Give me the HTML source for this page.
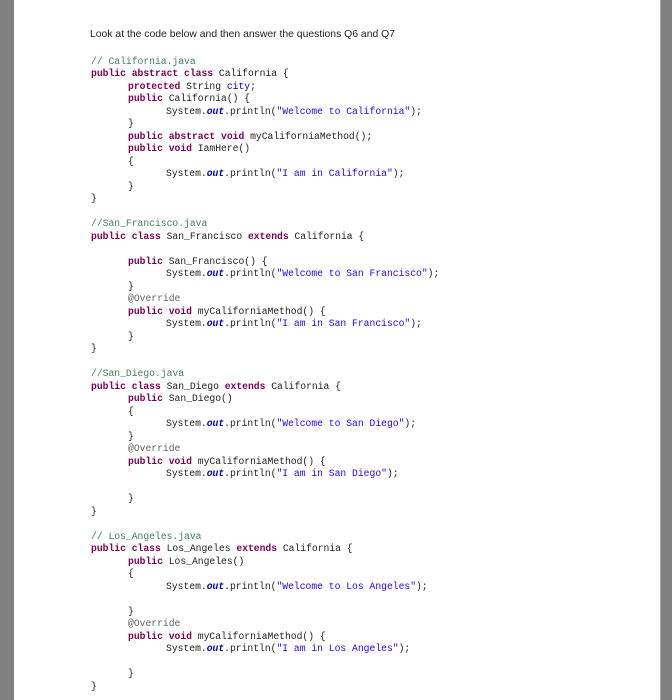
<!DOCTYPE html>
<html><head><meta charset="utf-8"><style>
html,body{margin:0;padding:0;background:#fff;width:672px;height:700px;overflow:hidden;position:relative}
.bl{position:absolute;left:0;top:0;width:14px;height:700px;background:#808080}
.br{position:absolute;left:660px;top:0;width:12px;height:700px;background:#808080;border-left:1px solid #a8a8a8}
.t{position:absolute;left:90px;top:29px;font:10.4px "Liberation Sans",sans-serif;color:#222}
.c{position:absolute;left:91px;top:55.5px;font:9.7px/12.5px "Liberation Mono",monospace;color:#222}
.c div{height:12.5px;white-space:pre}
.i1{padding-left:37px}.i2{padding-left:75px}
.k{color:#7f0055;font-weight:bold}
.m{color:#3f7f5f}
.s{color:#2a00ff}
.o{color:#0000c0;font-weight:bold;font-style:italic}
.f{color:#0000c0}
.a{color:#646464}
</style></head><body>
<div class="bl"></div><div class="br"></div>
<div class="t">Look at the code below and then answer the questions Q6 and Q7</div>
<div class="c">
<div class="m">// California.java</div>
<div><span class="k">public abstract class</span> California {</div>
<div class="i1"><span class="k">protected</span> String <span class="f">city</span>;</div>
<div class="i1"><span class="k">public</span> California() {</div>
<div class="i2">System.<span class="o">out</span>.println(<span class="s">"Welcome to California"</span>);</div>
<div class="i1">}</div>
<div class="i1"><span class="k">public abstract void</span> myCaliforniaMethod();</div>
<div class="i1"><span class="k">public void</span> IamHere()</div>
<div class="i1">{</div>
<div class="i2">System.<span class="o">out</span>.println(<span class="s">"I am in California"</span>);</div>
<div class="i1">}</div>
<div>}</div>
<div></div>
<div class="m">//San_Francisco.java</div>
<div><span class="k">public class</span> San_Francisco <span class="k">extends</span> California {</div>
<div></div>
<div class="i1"><span class="k">public</span> San_Francisco() {</div>
<div class="i2">System.<span class="o">out</span>.println(<span class="s">"Welcome to San Francisco"</span>);</div>
<div class="i1">}</div>
<div class="i1 a">@Override</div>
<div class="i1"><span class="k">public void</span> myCaliforniaMethod() {</div>
<div class="i2">System.<span class="o">out</span>.println(<span class="s">"I am in San Francisco"</span>);</div>
<div class="i1">}</div>
<div>}</div>
<div></div>
<div class="m">//San_Diego.java</div>
<div><span class="k">public class</span> San_Diego <span class="k">extends</span> California {</div>
<div class="i1"><span class="k">public</span> San_Diego()</div>
<div class="i1">{</div>
<div class="i2">System.<span class="o">out</span>.println(<span class="s">"Welcome to San Diego"</span>);</div>
<div class="i1">}</div>
<div class="i1 a">@Override</div>
<div class="i1"><span class="k">public void</span> myCaliforniaMethod() {</div>
<div class="i2">System.<span class="o">out</span>.println(<span class="s">"I am in San Diego"</span>);</div>
<div></div>
<div class="i1">}</div>
<div>}</div>
<div></div>
<div class="m">// Los_Angeles.java</div>
<div><span class="k">public class</span> Los_Angeles <span class="k">extends</span> California {</div>
<div class="i1"><span class="k">public</span> Los_Angeles()</div>
<div class="i1">{</div>
<div class="i2">System.<span class="o">out</span>.println(<span class="s">"Welcome to Los Angeles"</span>);</div>
<div></div>
<div class="i1">}</div>
<div class="i1 a">@Override</div>
<div class="i1"><span class="k">public void</span> myCaliforniaMethod() {</div>
<div class="i2">System.<span class="o">out</span>.println(<span class="s">"I am in Los Angeles"</span>);</div>
<div></div>
<div class="i1">}</div>
<div>}</div>
</div>
</body></html>
